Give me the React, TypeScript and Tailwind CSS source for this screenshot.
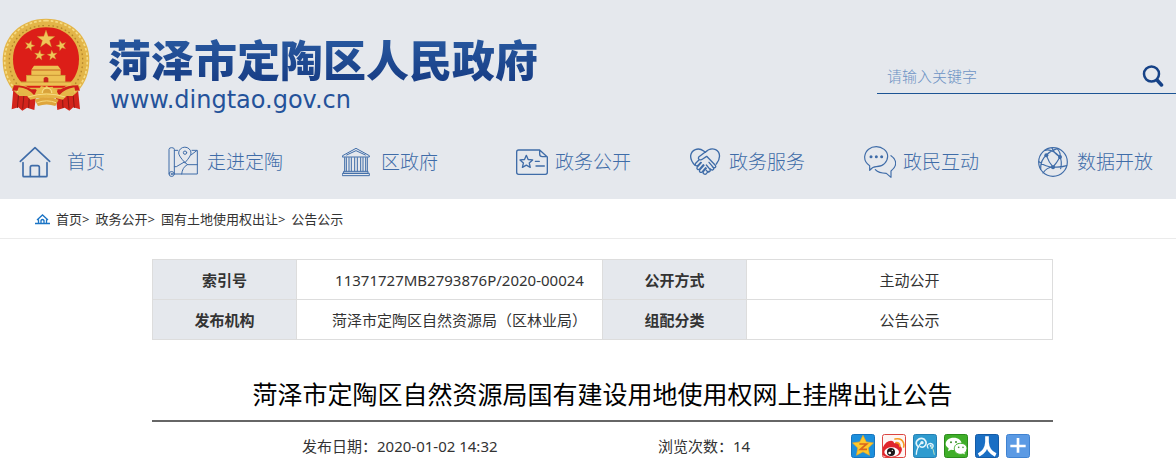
import type { ReactNode } from 'react';

const star = (cx: number, cy: number, r: number, turn = 0, inner = 0.4) =>
  Array.from({ length: 10 }, (_, i) => {
    const a = ((-90 + turn + i * 36) * Math.PI) / 180;
    const d = i % 2 ? r * inner : r;
    return `${(cx + d * Math.cos(a)).toFixed(1)},${(cy + d * Math.sin(a)).toFixed(1)}`;
  }).join(' ');

const navItems: { label: string; wide?: boolean; viewBox: string; icon: ReactNode }[] = [
  {
    label: '首页',
    wide: true,
    viewBox: '57 33 96 96',
    icon: (
      <g strokeWidth="5">
        <path d="M61 79L105 38l44 41" />
        <path d="M69 83v39q0 3 3 3h66q3 0 3-3V83" />
        <path d="M91 124V97q0-5 5-5h17q5 0 5 5v27" />
      </g>
    ),
  },
  {
    label: '走进定陶',
    viewBox: '504 33 96 96',
    icon: (
      <g>
        <path d="M507 117V43q0-5 8-5t8 5v74" />
        <circle cx="515" cy="117" r="7.500" />
        <circle cx="515" cy="117" r="2" />
        <path d="M523 46h10M576 46h16v71h-68M523 95h6l24-14 10 8M592 89h-30q-15 8-17 28M573 60l17-13" />
        <path d="M555 83q-19-20-19-29a18 17 0 0 1 37 0q0 9-18 29z" />
        <circle cx="555" cy="53" r="5" />
      </g>
    ),
  },
  {
    label: '区政府',
    viewBox: '42 33 96 96',
    icon: (
      <g>
        <path d="M44 62l40-22 40 22v4H44zM56 60l28-13 28 13" />
        <path d="M50 68v40M55 68v40M63 68v40M70 68v40M80 68v40M88 68v40M98 68v40M105 68v40M113 68v40M118 68v40" />
        <path d="M48 109h72v6H48zM44 115h80v7H44z" />
      </g>
    ),
  },
  {
    label: '政务公开',
    viewBox: '561 33 96 96',
    icon: (
      <g strokeWidth="4">
        <path d="M632 45h-63q-6 0-6 6v61q0 6 6 6h80q6 0 6-6V66zM632 45v12q0 8 8 8h14" />
        <polygon points={star(592, 81, 20, 0, 0.46)} />
        <path d="M619 79h12M621 93h25" />
      </g>
    ),
  },
  {
    label: '政务服务',
    viewBox: '36 33 96 96',
    icon: (
      <g strokeWidth="4">
        <path d="M51 91Q37 77 38 62c2-17 22-27 39-14l5 4q14-15 31-8c15 8 15 27 2 43" />
        <path d="M82 51L63 65q-4 6 1 9 5 2 10-2l12-8 26 27q3 5-1 7-4 1-8-3M93 82l13 15q3 6-2 8-4 1-8-4M85 90l11 13q2 6-3 8-4 1-8-5" />
        <path d="M62 76l-9 9q-3 5 1 7 3 2 6-1l8-9M70 83L58 96q-3 5 1 7 3 2 6-1l11-13M78 91L65 105q-2 5 2 7 3 1 6-2l10-12M85 100l-9 10q-2 5 2 7 4 2 7-1l6-7" />
      </g>
    ),
  },
  {
    label: '政民互动',
    viewBox: '552 33 96 96',
    icon: (
      <g strokeWidth="3.500">
        <path d="M569 106V92q-16-10-15-27c2-20 18-30 35-30s34 12 34 29-14 31-34 31q-11 0-20 11z" />
        <path d="M633 62q14 9 14 23 0 13-14 23v19l-14-12q-23 0-33-11" />
        <g fill="currentColor" stroke="none">
          <circle cx="573" cy="65" r="4.500" />
          <circle cx="589" cy="65" r="4.500" />
          <circle cx="605" cy="65" r="4.500" />
        </g>
      </g>
    ),
  },
  {
    label: '数据开放',
    viewBox: '54 33 96 96',
    icon: (
      <g strokeWidth="3.500">
        <circle cx="99" cy="81" r="43" />
        <path d="M75 46q20-6 45 20M96 39q5 15 24 27 7 15 2 35M111 40q12 13 9 26M79 61q12-14 33-20M79 61q-18 14-17 42M79 61q8 22 20 35M57 80q21 16 42 16 22 2 41-4M99 96q-19 1-30 18M99 96q11-12 21-30" />
        <g fill="currentColor" stroke="none">
          <circle cx="79" cy="61" r="6" />
          <circle cx="120" cy="66" r="6" />
          <circle cx="99" cy="97" r="6" />
        </g>
      </g>
    ),
  },
];

const crumbs = ['首页', '政务公开', '国有土地使用权出让', '公告公示'];

const infoRows = [
  ['索引号', '11371727MB2793876P/2020-00024', '公开方式', '主动公开'],
  ['发布机构', '菏泽市定陶区自然资源局（区林业局）', '组配分类', '公告公示'],
];

const shareItems: { label: string; fill: string; edge: string; icon: ReactNode }[] = [
  {
    label: 'QQ空间',
    fill: '#1c8fdc',
    edge: '#1673bd',
    icon: (
      <>
        <polygon points={star(36, 37, 33, 0, 0.5)} fill="#fdc92b" stroke="#f4a81c" strokeWidth="2" strokeLinejoin="round" />
        <path d="M25 30h22L28 46h20" fill="none" stroke="#d9661c" strokeWidth="5" />
      </>
    ),
  },
  {
    label: '新浪微博',
    fill: '#fdf5f3',
    edge: '#dc4540',
    icon: (
      <>
        <path d="M3 40q8-19 24-20 9 0 9 8 17-5 17 7 9 6 6 16-5 17-29 19Q9 71 3 64z" fill="#e0262c" />
        <ellipse cx="29" cy="54" rx="22" ry="14" fill="#fff" />
        <circle cx="27" cy="54" r="12" fill="#1d1718" />
        <circle cx="23" cy="57" r="4" fill="#fff" />
        <circle cx="31" cy="49" r="2" fill="#fff" />
        <path d="M39 15q21-4 26 13 2 6 0 11M42 26q11-1 12 11" fill="none" stroke="#f49a20" strokeWidth="5" strokeLinecap="round" />
      </>
    ),
  },
  {
    label: '腾讯微博',
    fill: '#2e9bcf',
    edge: '#237fb2',
    icon: (
      <>
        <g fill="none" stroke="#e4f5fb" strokeLinecap="round">
          <path d="M16 39q-11-10-3-20 9-10 21-3 11 11 0 21-6 5-12 1" strokeWidth="5" />
          <path d="M45 42q-5-8 2-12 8-4 13 3 2 7-5 9" strokeWidth="4" />
          <path d="M27 25q-16 14-17 36" strokeWidth="4" />
          <path d="M53 35q10 11 11 26" stroke="#b9dfc0" strokeWidth="3" />
        </g>
        <circle cx="27" cy="26" r="5" fill="#e4f5fb" />
        <circle cx="53" cy="35" r="3" fill="#e4f5fb" />
      </>
    ),
  },
  {
    label: '微信',
    fill: '#3fae29',
    edge: '#2a8b1b',
    icon: (
      <>
        <path d="M29 11c14 0 24 8 24 19S43 48 29 48q-4 0-8-1l-9 5 2-9C8 39 5 35 5 30c0-11 10-19 24-19z" fill="#fff" />
        <path d="M50 28c12 0 19 7 19 16q0 8-6 12l2 8-8-4q-4 1-7 1c-12 0-19-7-19-17s7-16 19-16z" fill="#fff" stroke="#3fae29" strokeWidth="3" />
        <g fill="#3c8f2c">
          <circle cx="21" cy="25" r="3" />
          <circle cx="36" cy="24" r="3" />
          <circle cx="44" cy="40" r="2.500" />
          <circle cx="57" cy="40" r="2.500" />
        </g>
      </>
    ),
  },
  {
    label: '人人网',
    fill: '#1a6fc4',
    edge: '#145ba6',
    icon: <path d="M36 7v17C35 43 28 54 11 63M36 24c1 17 9 31 26 39" fill="none" stroke="#fff" strokeWidth="11" />,
  },
  {
    label: '更多',
    fill: '#5b9ae4',
    edge: '#3f82d1',
    icon: <path d="M36 12v44M13 36h46" stroke="#fff" strokeWidth="8" />,
  },
];

function Emblem() {
  return (
    <svg viewBox="0 24 276 282" className="h-[94px] w-[92px] shrink-0" aria-hidden="true">
      <path d="M40 238l-5 60 20-6 12 10 14-9 22 7 5-42zM234 238l6 60-20-6-12 10-14-9-22 7-5-42z" fill="#d3241b" />
      <path d="M56 250l-4 44M72 252l-4 44M88 254l-2 40M219 250l4 44M203 252l4 44M187 254l2 40" stroke="#8d1912" strokeWidth="3" />
      <path d="M138 26C62 26 8 80 8 150q0 68 50 108h160q50-40 50-108C268 80 214 26 138 26z" fill="#e3b548" />
      <path d="M138 32C66 32 14 84 14 150q0 60 40 96M138 32c72 0 124 52 124 118q0 60-40 96" fill="none" stroke="#f6dc84" strokeWidth="5" strokeDasharray="8 6" />
      <path d="M132 47C70 47 28 96 28 150q0 52 32 82M144 47c62 0 104 49 104 103q0 52-32 82" fill="none" stroke="#b5842a" strokeWidth="4" strokeDasharray="5 8" />
      <path d="M138 52c-58 0-99 40-99 96 0 40 18 71 47 85h104c29-14 47-45 47-85 0-56-41-96-99-96z" fill="#dc1e18" />
      <g fill="#f0c659" stroke="#c98b26" strokeWidth="1">
        <polygon points={star(138, 88, 28)} />
        <polygon points={star(89, 107, 16, 18)} />
        <polygon points={star(184, 107, 16, -18)} />
        <polygon points={star(118, 136, 16, 8)} />
        <polygon points={star(157, 136, 16, -8)} />
      </g>
      <path d="M102 167h72l9 12H94zM94 181h88v14H94zM79 195h117v21H79zM60 215h154v12H60z" fill="#edc153" />
      <path d="M95 180h86M80 196h115M62 216h150" stroke="#b77c22" strokeWidth="2" />
      <path d="M131 205q7-8 14 0v12h-14z" fill="#c9241a" />
      <path d="M42 226q32 0 52 12h88q20-12 52-12l6 16q-40-2-54 20H92q-14-22-56-20z" fill="#cf2019" />
      <path d="M105 252l5-11-3-5 12-1 4-7 12 3 5-4 6 5 12-2 3 7 12 1-2 7 5 10-12 8H116z" fill="#e9bb4b" />
      <circle cx="141" cy="248" r="14" fill="#d9a23a" stroke="#f8dc82" strokeWidth="4" />
      <path d="M56 232q28 3 45 22 38-11 78 0 18-18 44-22l3 12q-21 6-37 25-47-15-98 0-15-20-39-26z" fill="#e6b647" />
      <path d="M104 269q36-14 72 0l-10 19q-26-9-52 0z" fill="#dfa63c" />
      <path d="M84 261q56-18 112 0M112 278q28-11 56 0" fill="none" stroke="#f7db83" strokeWidth="3" />
    </svg>
  );
}

function Header() {
  return (
    <header className="bg-[#e5e8ed] pb-[21px]">
      <div className="flex items-start justify-between pt-[18px]">
        <a href="#" className="flex items-start gap-4">
          <Emblem />
          <div className="pt-5">
            <h1 className="bg-linear-to-b from-[#28589f] to-[#173c84] bg-clip-text text-[43px] leading-[46px] font-black whitespace-nowrap text-transparent">
              菏泽市定陶区人民政府
            </h1>
            <p className="mt-1 pl-0.5 font-['DejaVu_Sans',sans-serif] text-2xl leading-6 text-[#24529a]">www.dingtao.gov.cn</p>
          </div>
        </a>
        <form className="mt-10 flex h-9 w-[299px] items-center border-b border-[#1c5494] pr-3 pl-2.5" onSubmit={(e) => e.preventDefault()}>
          <input
            type="text"
            aria-label="请输入关键字"
            placeholder="请输入关键字"
            className="min-w-0 flex-1 bg-transparent text-[15px] leading-5 font-light outline-none placeholder:text-[#6d93c4]"
          />
          <button type="submit" aria-label="搜索">
            <svg viewBox="0 0 22 22" className="size-[22px]" fill="none" stroke="#164287" strokeLinecap="round">
              <circle cx="9.500" cy="9" r="7.500" strokeWidth="2.500" />
              <path d="M15 15l4.500 5" strokeWidth="3.500" />
            </svg>
          </button>
        </form>
      </div>

      <nav className="mt-[34px] grid grid-cols-[149fr_repeat(5,174fr)_138fr] pl-[19px]">
        {navItems.map((item) => (
          <a
            key={item.label}
            href="#"
            className={`flex items-center text-[19px] leading-8 font-light whitespace-nowrap text-[#3f6ca8] ${item.wide ? 'gap-4' : 'gap-[7px]'}`}
          >
            <svg viewBox={item.viewBox} className="size-8 shrink-0" fill="none" stroke="currentColor" strokeWidth="3" strokeLinejoin="round" strokeLinecap="round" aria-hidden="true">
              {item.icon}
            </svg>
            {item.label}
          </a>
        ))}
      </nav>
    </header>
  );
}

function Breadcrumb() {
  return (
    <div className="flex h-10 items-center gap-1.5 border-b border-[#ebebeb] pl-[35px] text-[13px] leading-5 text-[#333]">
      <svg viewBox="0 0 15 12" className="h-3 w-[15px]" fill="none" stroke="#1b74c5" aria-hidden="true">
        <path d="M0 10.500h15M2 7l5.500-5L13 7M3.500 6.500v4M11.500 6.500v4M6 10V7.500q1.500-2 3 0V10" strokeWidth="1.300" />
      </svg>
      {crumbs.map((crumb, i) => (
        <span key={crumb}>
          <a href="#">{crumb}</a>
          {i < crumbs.length - 1 && '>'}
        </span>
      ))}
    </div>
  );
}

function InfoTable() {
  return (
    <table className="w-full table-fixed border-collapse text-center text-[15px] leading-5 text-[#333]">
      <colgroup>
        <col className="w-[16%]" />
        <col className="w-[34%]" />
        <col className="w-[16%]" />
        <col className="w-[34%]" />
      </colgroup>
      <tbody>
        {infoRows.map((row) => (
          <tr key={row[0]} className="h-10">
            {row.map((cell, i) =>
              i % 2 === 0 ? (
                <th key={cell} scope="row" className="border border-[#ddd] bg-[#e5e8ed] font-bold">
                  {cell}
                </th>
              ) : (
                <td key={cell} className="border border-[#ddd] pl-5 whitespace-nowrap">
                  {cell}
                </td>
              )
            )}
          </tr>
        ))}
      </tbody>
    </table>
  );
}

export default function App() {
  return (
    <div className="min-h-screen overflow-x-hidden bg-white font-['Noto_Sans','Noto_Sans_CJK_SC',sans-serif]">
      <Header />
      <Breadcrumb />
      <main className="pt-5 pr-[123px] pl-[152px]">
        <InfoTable />
        <h2 className="mt-9 border-b-2 border-[#666] pb-2 text-center text-[25px] leading-9 text-black">
          菏泽市定陶区自然资源局国有建设用地使用权网上挂牌出让公告
        </h2>
        <div className="mt-3 flex items-center pr-[23px] pl-[150px] text-[15px] leading-6 text-[#333]">
          <span className="w-[356px]">发布日期：2020-01-02 14:32</span>
          <span>浏览次数：14</span>
          <div className="ml-auto flex gap-[7px]">
            {shareItems.map((item) => (
              <a key={item.label} href="#" aria-label={item.label}>
                <svg viewBox="0 0 72 72" className="size-6">
                  <rect x="1.500" y="1.500" width="69" height="69" rx="6" fill={item.fill} stroke={item.edge} strokeWidth="3" />
                  {item.icon}
                </svg>
              </a>
            ))}
          </div>
        </div>
      </main>
    </div>
  );
}
